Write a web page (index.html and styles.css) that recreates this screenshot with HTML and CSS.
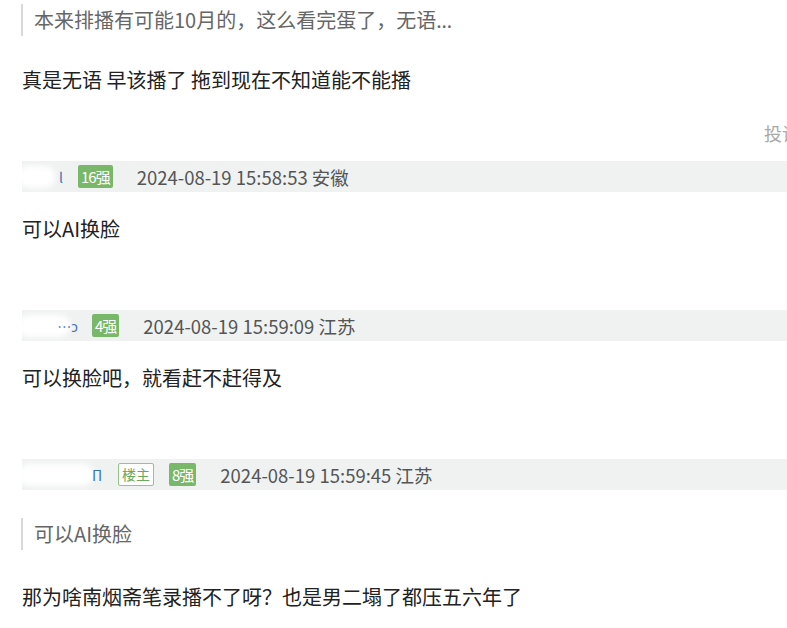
FILE: index.html
```html
<!DOCTYPE html>
<html lang="zh-CN">
<head>
<meta charset="UTF-8">
<meta name="viewport" content="width=device-width, initial-scale=1.0">
<title>评论</title>
<link rel="stylesheet" href="styles.css">
</head>
<body>

<div class="thread">

    <div class="comment">
        <blockquote class="quote">本来排播有可能10月的，这么看完蛋了，无语<span class="dots">…</span></blockquote>
        <p class="text">真是无语 早该播了 拖到现在不知道能不能播</p>
        <div class="foot"><span class="report">投诉</span></div>
    </div>

    <div class="comment">
        <div class="head">
            <span class="user user-a"><span class="mask"></span><span class="nick">l</span></span>
            <span class="level">16强</span>
            <span class="meta">2024-08-19 15:58:53 安徽</span>
        </div>
        <p class="text">可以AI换脸</p>
        <div class="foot"></div>
    </div>

    <div class="comment">
        <div class="head">
            <span class="user user-b"><span class="mask"></span><span class="nick">…ɔ</span></span>
            <span class="level">4强</span>
            <span class="meta">2024-08-19 15:59:09 江苏</span>
        </div>
        <p class="text">可以换脸吧，就看赶不赶得及</p>
        <div class="foot"></div>
    </div>

    <div class="comment">
        <div class="head">
            <span class="user user-c"><span class="mask"></span><span class="nick">Π</span></span>
            <span class="owner">楼主</span>
            <span class="level">8强</span>
            <span class="meta">2024-08-19 15:59:45 江苏</span>
        </div>
        <blockquote class="quote quote-reply">可以AI换脸</blockquote>
        <p class="text">那为啥南烟斋笔录播不了呀？也是男二塌了都压五六年了</p>
    </div>

</div>

</body>
</html>
```

FILE: styles.css
```css
html {
    overflow: hidden;
}

body {
    font-family: "Noto Sans CJK SC", "Noto Sans", sans-serif;
    background-color: #ffffff;
    color: #1f1f1f;
    margin: 0;
    padding: 4px 0 0 22px;
}

.thread {
    width: 790px;
}

.quote {
    margin: 0 0 30px -1px;
    padding-left: 11px;
    border-left: 2px solid #d9d9d9;
    height: 32px;
    line-height: 32px;
    font-size: 20px;
    color: #666;
}

.dots {
    font-family: "Noto Sans", sans-serif;
}

.quote-reply {
    margin-top: 28px;
    margin-bottom: 33px;
}

.text {
    margin: 0;
    height: 28px;
    line-height: 28px;
    font-size: 20px;
    color: #222;
}

.foot {
    height: 67px;
    display: flex;
    justify-content: flex-end;
    align-items: flex-start;
}

.report {
    margin-top: 29px;
    padding-right: 12px;
    font-size: 18px;
    line-height: 20px;
    color: #a8a8a8;
}

.head {
    height: 31px;
    display: flex;
    align-items: center;
    background-color: #eff2f1;
    margin-bottom: 23px;
}

.user {
    position: relative;
    display: flex;
    align-items: center;
    justify-content: flex-end;
    height: 31px;
    font-size: 14px;
    color: #3b6fb5;
}

.mask {
    position: absolute;
    left: -4px;
    right: 8px;
    top: 5px;
    bottom: 4px;
    background-color: #ffffff;
    border-radius: 10px;
    filter: blur(3px);
}

.nick {
    position: relative;
}

.user-a {
    width: 41px;
    margin-right: 15px;
}

.user-b {
    width: 56px;
    margin-right: 14px;
}

.user-c {
    width: 80px;
    margin-right: 16px;
}

.level {
    height: 23px;
    line-height: 23px;
    padding: 0 3px;
    background-color: #79b868;
    color: #ffffff;
    font-size: 15px;
    border-radius: 2px;
    letter-spacing: -1px;
}

.owner {
    height: 21px;
    line-height: 21px;
    padding: 0 3px;
    border: 1px solid #93c48b;
    color: #6aa85c;
    background-color: #ffffff;
    font-size: 14px;
    border-radius: 2px;
    margin-right: 15px;
}

.meta {
    margin-left: 24px;
    font-size: 18.5px;
    color: #555;
}
```
